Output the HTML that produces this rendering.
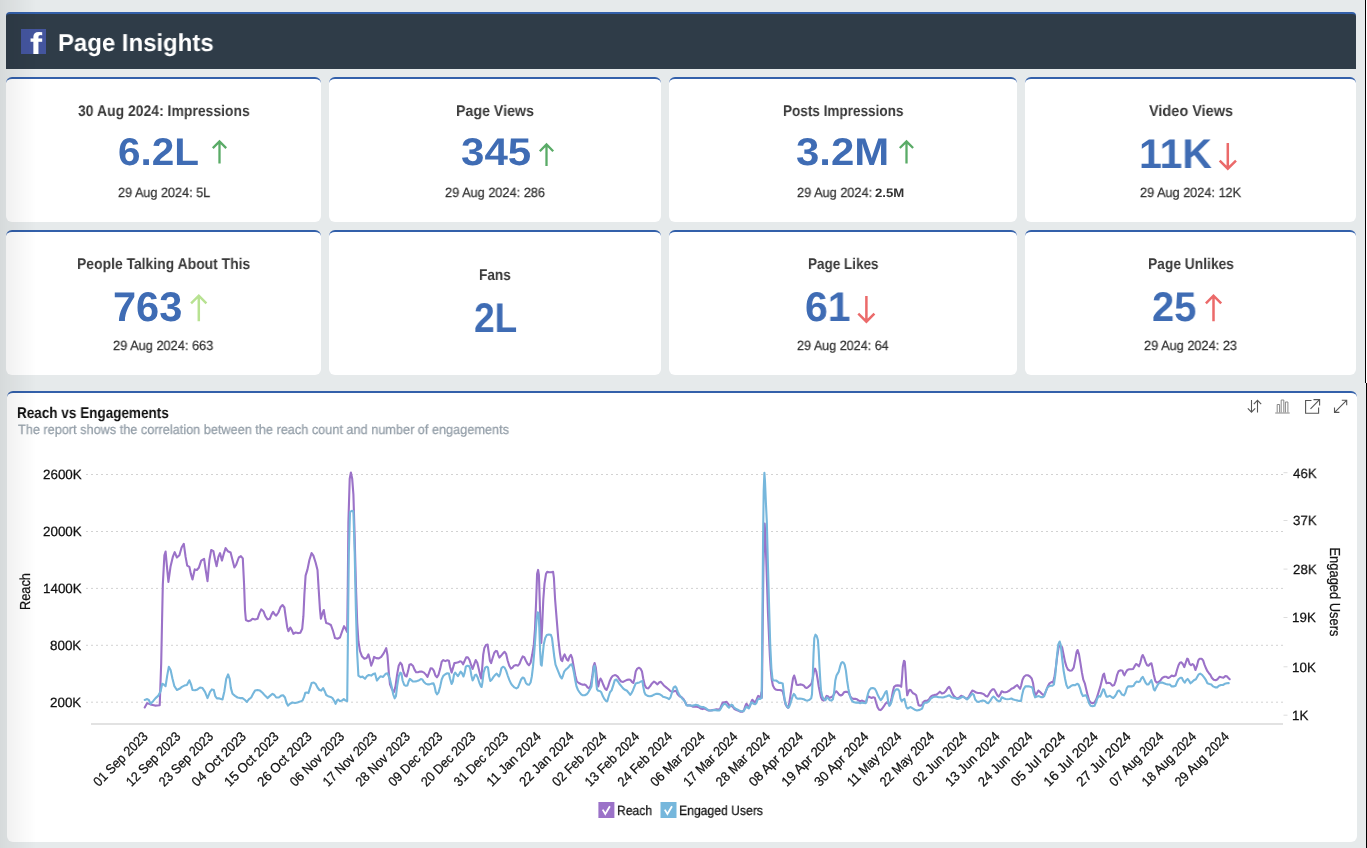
<!DOCTYPE html>
<html><head><meta charset="utf-8"><title>Page Insights</title>
<style>
html,body{margin:0;padding:0}
body{width:1367px;height:848px;overflow:hidden;background:#e6eaeb;position:relative;font-family:"Liberation Sans", sans-serif}
.hdr{position:absolute;left:6px;top:12px;width:1350px;height:55px;background:#2f3c48;border-top:2px solid #3360aa;border-radius:4px 4px 0 0}
.card{position:absolute;background:#fff;border-top:2px solid #3360aa;border-radius:6px;box-sizing:content-box}
.t{will-change:transform;text-rendering:geometricPrecision;position:absolute;white-space:nowrap;line-height:1;transform-origin:0 0;display:block}
.fb{position:absolute;left:21px;top:29px;width:25px;height:25px;background:#44559e;overflow:hidden}
.fb span{will-change:transform;text-rendering:geometricPrecision;position:absolute;left:9px;top:-1.3px;font-size:33px;font-weight:700;color:#fff;line-height:1;transform:scaleX(1.1);transform-origin:0 0}
svg{position:absolute;left:0;top:0;will-change:transform}
svg text{font-family:"Liberation Sans", sans-serif;fill:#111;stroke:#111;stroke-width:0.25px;text-rendering:geometricPrecision}
.shade{position:absolute;left:0;top:0;width:36px;height:848px;background:linear-gradient(to right,rgba(0,0,0,0.065),rgba(0,0,0,0))}
.vl{position:absolute;background:#000;width:1px}
</style></head><body>
<div class="hdr"></div>
<div class="fb"><span>f</span></div>
<div class="card" style="left:6px;top:77px;width:315px;height:143px"></div><div class="card" style="left:329px;top:77px;width:332px;height:143px"></div><div class="card" style="left:669px;top:77px;width:348px;height:143px"></div><div class="card" style="left:1025px;top:77px;width:331px;height:143px"></div><div class="card" style="left:6px;top:230px;width:315px;height:143px"></div><div class="card" style="left:329px;top:230px;width:332px;height:143px"></div><div class="card" style="left:669px;top:230px;width:348px;height:143px"></div><div class="card" style="left:1025px;top:230px;width:331px;height:143px"></div>
<div class="card" style="left:7px;top:391px;width:1350px;height:449px"></div>
<svg width="1367" height="848" viewBox="0 0 1367 848">
<path d="M219.5,163.4 V141.4 M212.8,148.1 L219.5,141.4 L226.2,148.1" stroke="#5aab67" stroke-width="2.3" fill="none" stroke-linejoin="miter"/><path d="M546.5,166.0 V144.5 M539.8,151.2 L546.5,144.5 L553.2,151.2" stroke="#5aab67" stroke-width="2.3" fill="none" stroke-linejoin="miter"/><path d="M906.5,163.4 V141.4 M899.8,148.0 L906.5,141.4 L913.1,148.0" stroke="#5aab67" stroke-width="2.3" fill="none" stroke-linejoin="miter"/><path d="M1227.8,143.0 V168.7 M1219.7,160.6 L1227.8,168.7 L1236.0,160.6" stroke="#eb6a6a" stroke-width="2.5" fill="none" stroke-linejoin="miter"/><path d="M198.8,321.3 V295.7 M191.1,303.3 L198.8,295.7 L206.4,303.3" stroke="#b8e292" stroke-width="2.5" fill="none" stroke-linejoin="miter"/><path d="M866.4,296.0 V321.7 M858.3,313.6 L866.4,321.7 L874.4,313.6" stroke="#eb6a6a" stroke-width="2.5" fill="none" stroke-linejoin="miter"/><path d="M1213.5,321.3 V295.7 M1205.9,303.4 L1213.5,295.7 L1221.2,303.4" stroke="#eb6a6a" stroke-width="2.5" fill="none" stroke-linejoin="miter"/>
<line x1="86" x2="1283" y1="474.5" y2="474.5" stroke="#d2d2d2" stroke-width="1" stroke-dasharray="2,3"/><line x1="86" x2="1283" y1="531.5" y2="531.5" stroke="#d2d2d2" stroke-width="1" stroke-dasharray="2,3"/><line x1="86" x2="1283" y1="588.4" y2="588.4" stroke="#d2d2d2" stroke-width="1" stroke-dasharray="2,3"/><line x1="86" x2="1283" y1="645.3" y2="645.3" stroke="#d2d2d2" stroke-width="1" stroke-dasharray="2,3"/><line x1="86" x2="1283" y1="702.2" y2="702.2" stroke="#d2d2d2" stroke-width="1" stroke-dasharray="2,3"/><line x1="1283.5" x2="1287.5" y1="472.7" y2="472.7" stroke="#dcdcdc" stroke-width="1"/><line x1="1283.5" x2="1287.5" y1="520.5" y2="520.5" stroke="#dcdcdc" stroke-width="1"/><line x1="1283.5" x2="1287.5" y1="569.1" y2="569.1" stroke="#dcdcdc" stroke-width="1"/><line x1="1283.5" x2="1287.5" y1="617.5" y2="617.5" stroke="#dcdcdc" stroke-width="1"/><line x1="1283.5" x2="1287.5" y1="666.8" y2="666.8" stroke="#dcdcdc" stroke-width="1"/><line x1="1283.5" x2="1287.5" y1="715.2" y2="715.2" stroke="#dcdcdc" stroke-width="1"/><line x1="91" x2="1283" y1="724" y2="724" stroke="#e2e2e2" stroke-width="2"/>
<path d="M144.7,707.5 L147.2,703.1 L150.3,704.4 L155.0,705.6 L159.7,705.3 L161.2,663.1 L162.8,585.0 L164.4,555.3 L165.6,551.6 L166.9,566.2 L168.4,581.9 L170.6,566.2 L172.8,556.9 L174.7,552.2 L176.9,557.5 L179.4,555.3 L181.6,547.5 L183.8,543.8 L185.6,556.9 L187.2,565.6 L189.4,566.9 L190.9,574.1 L192.5,579.4 L194.7,569.4 L196.9,570.0 L198.8,567.8 L201.2,560.6 L204.1,558.8 L205.6,569.4 L207.5,581.2 L209.4,560.0 L211.2,550.0 L213.4,551.2 L215.0,559.4 L216.6,566.2 L218.4,556.9 L220.0,553.1 L221.9,560.6 L223.8,553.8 L225.6,548.1 L227.8,551.2 L230.6,552.5 L232.5,560.0 L234.4,567.5 L236.2,564.7 L238.8,557.5 L240.9,556.2 L242.8,558.4 L244.1,585.0 L245.0,610.0 L245.9,620.0 L248.1,621.2 L250.6,620.6 L252.5,618.8 L255.0,619.4 L257.5,618.8 L259.4,613.1 L261.2,609.4 L263.4,611.2 L265.3,616.2 L267.5,619.4 L269.7,618.8 L271.6,614.4 L273.1,611.9 L274.7,614.4 L276.2,615.6 L278.4,612.5 L280.6,606.9 L282.5,605.0 L284.4,607.5 L285.6,616.2 L287.2,627.2 L288.4,631.2 L290.3,627.5 L291.9,630.3 L293.4,633.8 L295.6,632.5 L297.8,633.1 L300.3,632.8 L302.2,628.8 L303.4,616.2 L304.4,594.4 L305.6,575.6 L307.5,569.4 L309.4,560.0 L311.6,553.1 L313.4,555.6 L315.6,562.5 L317.5,570.0 L318.8,591.2 L320.0,610.0 L320.9,618.8 L322.5,613.1 L323.8,610.0 L325.0,617.5 L326.2,623.1 L328.8,623.8 L330.9,625.0 L333.1,631.2 L335.0,638.1 L337.5,638.8 L340.0,637.5 L342.2,631.2 L344.1,626.2 L345.6,628.8 L347.2,631.9 L347.8,585.0 L348.4,522.5 L349.7,478.8 L350.9,472.5 L352.2,478.8 L353.4,494.4 L354.7,538.1 L355.9,585.0 L357.2,622.5 L358.4,641.2 L360.0,651.2 L361.9,656.2 L364.4,658.8 L366.6,658.1 L368.4,654.4 L370.0,660.0 L371.2,665.6 L372.8,661.6 L374.1,656.9 L376.2,658.1 L378.8,658.4 L381.2,656.9 L383.8,653.1 L386.2,648.1 L387.5,655.3 L388.8,672.5 L390.0,684.4 L392.0,689.4 L394.0,691.9 L395.5,686.4 L397.1,674.6 L398.7,665.7 L400.3,662.7 L401.9,664.7 L403.4,671.6 L405.0,675.5 L406.6,676.5 L408.2,670.6 L409.4,664.7 L410.9,664.1 L412.9,665.7 L414.5,669.6 L416.1,672.2 L418.0,672.2 L420.0,671.6 L422.0,671.6 L424.0,672.6 L425.9,674.6 L427.5,676.9 L429.1,672.6 L430.7,668.2 L432.3,668.6 L433.8,670.6 L435.4,675.5 L437.0,677.3 L438.6,674.6 L440.2,668.6 L441.7,661.7 L443.3,660.1 L445.3,661.1 L447.3,660.3 L448.9,660.7 L450.0,666.7 L451.6,672.6 L452.8,668.6 L454.4,663.1 L456.4,662.7 L458.3,662.3 L459.9,661.3 L461.5,661.7 L463.1,664.3 L464.7,660.7 L466.2,657.4 L467.8,657.2 L469.4,659.7 L471.0,664.7 L472.6,669.0 L474.1,664.7 L475.7,660.1 L477.3,662.7 L478.9,669.6 L480.5,676.5 L481.3,678.5 L482.0,670.6 L483.2,654.8 L484.4,647.9 L486.0,644.9 L487.6,644.5 L488.8,652.8 L489.9,660.7 L491.1,663.1 L492.7,657.8 L494.3,652.8 L495.9,650.9 L497.1,651.3 L498.2,654.8 L499.4,657.6 L501.0,655.8 L502.6,653.8 L504.6,651.8 L506.1,653.8 L507.7,660.7 L509.3,665.7 L510.9,668.6 L512.5,667.6 L514.0,665.7 L516.0,665.1 L518.0,665.7 L519.6,663.7 L521.1,659.7 L522.7,656.4 L524.3,657.2 L525.9,660.7 L527.5,663.7 L529.0,665.3 L530.6,662.7 L532.2,654.8 L533.8,644.9 L535.0,629.1 L536.2,599.5 L537.1,573.8 L538.1,569.9 L538.9,574.8 L539.7,599.5 L540.5,627.2 L541.3,643.0 L542.1,627.2 L543.3,599.5 L544.5,583.7 L546.0,573.8 L547.2,571.9 L549.2,572.2 L551.2,572.2 L553.1,571.9 L553.9,577.8 L555.1,599.5 L556.7,619.3 L558.3,639.0 L559.9,652.8 L561.0,659.7 L562.2,661.1 L563.4,656.8 L564.6,654.4 L565.8,657.2 L567.0,659.7 L568.2,660.7 L569.3,657.2 L570.9,654.8 L572.1,657.8 L573.7,666.7 L575.3,675.5 L576.8,681.5 L578.8,683.0 L580.8,684.0 L582.8,684.8 L584.4,684.4 L585.9,685.2 L587.5,687.4 L589.1,688.4 L590.7,685.4 L592.3,676.5 L593.4,666.7 L594.6,663.1 L595.8,667.6 L597.0,678.5 L598.2,686.4 L599.4,681.5 L600.5,678.5 L601.7,680.5 L603.3,684.8 L604.9,688.4 L606.5,690.0 L608.1,686.4 L609.6,681.5 L611.2,677.9 L612.8,675.9 L614.8,675.1 L616.3,675.5 L617.9,676.9 L619.5,679.5 L621.1,681.5 L623.1,681.9 L625.0,680.9 L627.0,679.9 L629.0,679.5 L630.6,680.1 L632.1,682.1 L633.3,682.9 L634.5,678.5 L635.7,671.6 L637.3,668.6 L638.9,667.8 L640.4,668.6 L642.0,671.6 L643.2,678.5 L644.8,685.4 L646.4,688.0 L648.3,688.4 L649.9,686.4 L650.0,686.4 L652.0,683.4 L654.0,681.5 L655.9,682.9 L657.5,684.4 L659.1,682.5 L660.7,681.7 L662.2,683.4 L664.2,685.8 L666.2,687.4 L668.2,689.0 L670.1,690.8 L672.1,691.9 L674.1,691.3 L676.1,690.8 L677.7,694.3 L679.6,696.3 L681.6,697.3 L683.6,699.2 L685.2,702.2 L686.7,705.2 L688.7,705.2 L690.7,705.6 L692.7,706.6 L694.6,706.8 L696.6,706.8 L698.6,707.1 L700.6,708.5 L702.5,709.1 L704.5,708.5 L706.5,709.5 L708.5,710.5 L710.4,710.5 L712.4,710.1 L714.4,709.7 L716.4,709.3 L718.3,709.5 L719.9,709.1 L721.1,706.2 L722.7,702.6 L724.7,702.2 L726.6,701.8 L728.2,703.8 L729.8,706.2 L731.4,705.8 L733.0,707.1 L734.5,709.1 L736.5,710.1 L738.5,710.9 L740.5,711.7 L742.4,711.7 L744.0,710.1 L745.2,706.2 L746.4,703.8 L747.6,705.2 L748.8,707.1 L749.9,706.2 L751.1,702.2 L752.3,699.8 L753.5,701.0 L754.7,702.6 L755.9,701.2 L757.1,698.3 L758.2,695.9 L759.4,696.7 L760.6,697.5 L761.4,692.3 L761.9,697.7 L762.5,644.0 L763.4,567.4 L764.7,523.5 L765.6,539.8 L766.2,558.2 L767.1,585.8 L768.0,613.4 L769.0,636.4 L769.9,656.3 L770.8,670.1 L771.7,679.3 L772.9,685.5 L774.5,688.5 L775.6,689.4 L777.6,690.0 L779.6,690.0 L781.5,690.4 L782.7,691.3 L783.9,696.3 L785.5,704.2 L787.1,707.1 L788.3,707.7 L789.4,702.2 L790.6,694.3 L791.8,686.4 L793.0,678.5 L794.2,675.5 L795.4,679.5 L796.6,684.8 L798.1,685.0 L800.1,684.4 L802.1,684.8 L803.7,685.4 L805.2,687.4 L806.8,688.0 L808.4,686.8 L810.0,685.4 L811.6,683.4 L812.7,678.5 L813.9,671.6 L815.1,668.6 L816.3,671.6 L817.5,678.5 L818.7,686.4 L819.9,692.3 L821.0,697.3 L822.2,699.8 L823.8,700.6 L825.4,698.3 L826.6,695.9 L827.8,696.3 L829.3,697.9 L830.9,697.3 L832.5,696.3 L834.1,694.3 L835.3,691.9 L836.5,691.3 L837.6,692.7 L839.2,694.7 L840.8,695.5 L842.4,694.7 L844.0,692.3 L845.5,691.7 L847.1,691.9 L848.7,692.7 L850.3,696.3 L851.9,698.3 L853.4,698.9 L855.4,698.9 L857.0,699.2 L858.6,700.6 L860.2,701.2 L861.7,700.6 L863.3,701.2 L864.9,701.8 L866.1,702.2 L867.3,698.3 L868.4,696.3 L870.0,697.3 L871.6,697.9 L873.2,697.3 L874.8,697.7 L876.0,702.2 L877.5,707.1 L879.1,709.7 L880.7,710.1 L882.3,708.5 L883.9,706.2 L885.4,703.8 L887.0,702.2 L888.2,703.2 L889.4,705.2 L890.6,702.2 L891.8,697.3 L892.9,691.3 L894.1,686.8 L895.7,685.6 L897.7,685.4 L899.7,685.6 L901.2,686.8 L902.0,678.5 L902.8,666.7 L904.0,660.7 L904.8,661.7 L905.6,672.6 L906.4,686.4 L907.2,695.3 L908.3,692.3 L909.5,689.8 L910.7,690.0 L911.9,691.9 L913.1,693.3 L914.7,693.9 L916.2,695.3 L917.4,700.2 L918.6,705.2 L920.1,705.7 L922.1,705.0 L923.5,701.9 L925.0,700.7 L926.9,700.9 L928.8,699.5 L930.8,696.6 L932.7,695.4 L934.6,694.9 L936.6,694.6 L938.5,693.0 L939.9,691.7 L941.9,693.4 L943.8,693.0 L945.7,691.3 L947.7,688.1 L949.1,686.9 L950.6,689.3 L952.0,693.0 L953.9,696.1 L955.9,697.8 L957.8,698.5 L959.7,697.1 L961.2,695.8 L963.1,696.6 L965.0,697.8 L967.0,699.0 L968.9,696.6 L970.8,693.0 L972.3,690.5 L974.2,691.3 L976.2,692.5 L978.1,693.0 L980.0,693.0 L981.9,693.4 L983.9,694.2 L985.8,696.1 L987.3,696.6 L988.7,694.6 L990.6,691.3 L992.6,689.3 L994.0,689.3 L995.5,691.7 L997.4,695.4 L998.8,696.6 L1000.3,694.2 L1001.7,691.3 L1003.7,692.2 L1005.6,692.2 L1007.5,691.7 L1009.5,690.5 L1011.4,688.8 L1013.3,688.1 L1015.3,686.4 L1017.2,685.0 L1018.6,686.9 L1020.1,688.8 L1021.1,685.7 L1022.5,679.7 L1024.0,676.8 L1025.9,675.3 L1027.8,675.3 L1029.7,676.3 L1031.7,678.5 L1033.1,683.3 L1034.1,690.5 L1035.5,695.4 L1037.0,693.0 L1038.4,690.5 L1039.9,691.7 L1041.8,693.7 L1043.8,695.4 L1045.2,693.0 L1046.6,689.3 L1048.1,685.7 L1049.5,683.3 L1051.5,682.1 L1052.9,682.6 L1054.4,677.3 L1055.8,667.6 L1057.3,655.5 L1058.7,647.1 L1060.2,645.9 L1062.1,647.1 L1063.5,654.3 L1065.0,661.6 L1066.4,666.4 L1067.9,669.5 L1069.8,670.7 L1071.8,670.5 L1073.7,667.6 L1075.1,660.4 L1076.6,651.9 L1077.6,650.0 L1079.0,654.3 L1080.4,662.8 L1081.9,672.4 L1083.3,679.7 L1084.8,683.3 L1086.2,689.3 L1087.7,695.4 L1089.1,700.2 L1090.6,702.6 L1092.5,703.3 L1094.5,702.6 L1096.4,699.0 L1098.3,693.0 L1100.2,686.9 L1101.7,680.9 L1103.1,674.8 L1104.1,673.6 L1105.1,678.5 L1106.5,683.3 L1108.5,682.8 L1110.4,683.3 L1112.3,685.7 L1114.2,685.0 L1115.7,680.9 L1117.1,674.8 L1118.6,671.2 L1120.5,670.3 L1122.5,670.7 L1123.4,673.6 L1124.4,675.3 L1125.8,672.4 L1127.3,670.0 L1129.2,669.3 L1131.1,669.3 L1133.1,669.0 L1134.5,666.4 L1136.0,664.0 L1137.4,664.7 L1138.9,666.4 L1140.3,662.8 L1141.8,656.7 L1142.7,655.0 L1144.2,657.9 L1145.6,662.3 L1147.1,665.2 L1148.5,665.7 L1150.0,664.0 L1151.4,663.3 L1152.4,667.6 L1153.8,674.8 L1155.3,680.9 L1156.7,682.6 L1158.7,682.1 L1160.6,680.2 L1162.5,677.7 L1164.5,676.8 L1166.4,676.8 L1168.3,678.0 L1170.3,676.8 L1171.7,675.6 L1173.6,676.3 L1175.6,675.3 L1177.0,670.0 L1178.5,665.2 L1179.9,662.8 L1181.4,662.3 L1182.8,664.0 L1184.3,667.1 L1185.7,662.8 L1187.2,658.7 L1188.1,659.2 L1189.6,664.0 L1191.0,665.2 L1192.5,664.0 L1193.9,665.2 L1195.4,670.0 L1196.8,666.4 L1198.3,660.4 L1199.7,658.7 L1201.6,658.7 L1203.1,660.4 L1204.5,664.7 L1206.0,668.3 L1207.4,671.2 L1208.9,673.2 L1210.3,674.8 L1211.8,677.7 L1213.7,679.7 L1215.6,680.2 L1217.6,679.2 L1219.5,676.8 L1221.4,677.3 L1223.4,677.7 L1225.3,676.1 L1226.8,676.3 L1228.2,677.7 L1229.7,679.2" fill="none" stroke="#9b72c8" stroke-width="2.1" stroke-linejoin="round" stroke-linecap="round"/><path d="M144.7,700.0 L147.2,699.1 L148.8,700.0 L150.6,703.8 L153.1,701.2 L155.6,698.1 L158.1,695.9 L160.6,691.2 L162.2,683.8 L163.8,684.4 L165.6,686.2 L167.2,675.6 L168.8,666.9 L170.6,670.0 L172.5,678.8 L174.4,686.2 L176.9,690.0 L179.4,688.8 L181.9,686.9 L184.4,685.6 L186.9,685.0 L189.4,680.3 L191.2,685.0 L192.5,690.0 L195.0,690.3 L197.5,689.4 L200.0,687.5 L202.5,688.1 L205.0,691.9 L207.5,698.1 L210.0,691.9 L211.9,689.4 L213.8,690.0 L215.3,696.2 L216.9,698.4 L219.4,698.4 L222.5,699.4 L224.4,691.2 L226.2,678.8 L228.1,674.4 L229.7,678.8 L230.9,688.1 L232.5,693.8 L235.0,695.9 L237.5,697.5 L240.0,698.1 L242.5,698.1 L245.0,700.0 L246.9,701.9 L248.8,699.4 L251.2,697.5 L253.1,693.8 L255.0,690.6 L257.5,690.0 L260.0,690.6 L262.5,692.8 L265.0,695.6 L267.5,698.1 L270.0,695.9 L272.5,693.8 L274.4,695.0 L276.2,697.5 L278.8,697.5 L281.2,695.6 L283.1,695.3 L285.0,697.5 L286.6,703.1 L288.1,705.6 L290.0,703.8 L292.5,702.5 L295.0,703.1 L297.5,702.5 L300.0,701.6 L302.5,700.6 L304.1,696.9 L305.3,692.8 L306.9,692.5 L308.4,693.1 L310.0,688.1 L311.6,683.1 L313.8,682.5 L315.6,683.8 L317.5,687.5 L319.4,690.0 L321.2,690.6 L323.1,688.1 L324.7,691.2 L326.2,695.0 L328.1,696.2 L330.6,696.9 L332.5,698.1 L334.4,701.2 L335.6,703.8 L336.9,700.6 L338.1,699.4 L340.0,701.2 L341.9,700.6 L343.8,699.1 L345.6,700.6 L347.2,701.2 L347.8,647.5 L348.8,553.8 L350.0,511.9 L351.9,510.9 L353.4,511.2 L354.7,553.8 L355.9,610.0 L357.2,653.8 L358.4,675.6 L360.6,677.2 L362.5,676.6 L365.0,678.8 L366.9,676.2 L368.8,675.0 L371.2,675.6 L373.1,674.1 L375.0,673.4 L376.9,680.6 L378.8,678.1 L380.6,676.2 L383.1,676.9 L385.6,673.8 L387.5,673.4 L390.0,679.5 L391.6,686.4 L393.2,694.3 L394.7,698.3 L395.9,696.3 L397.1,686.4 L398.7,676.5 L400.3,672.6 L401.5,673.6 L402.6,680.5 L404.2,684.8 L405.8,685.8 L407.4,685.4 L408.6,681.5 L409.8,678.9 L411.3,680.1 L412.9,681.5 L414.9,681.5 L416.9,681.1 L418.8,680.5 L420.8,679.1 L422.4,679.5 L424.0,682.1 L425.6,683.6 L427.5,684.4 L429.5,684.4 L431.5,683.6 L433.5,683.4 L434.6,686.4 L435.8,692.3 L437.0,694.3 L438.6,692.3 L440.2,686.4 L441.7,679.5 L443.3,675.9 L445.3,674.2 L447.3,673.2 L448.9,673.6 L450.0,678.5 L451.6,684.0 L452.8,681.5 L454.0,674.6 L455.2,672.6 L456.4,674.2 L457.9,676.1 L459.5,673.6 L460.7,671.6 L461.9,673.0 L463.5,676.5 L464.7,672.6 L465.8,666.7 L467.4,665.7 L469.0,666.1 L470.2,668.6 L471.4,675.5 L472.6,680.5 L473.7,678.5 L474.9,675.1 L476.1,674.6 L477.7,677.5 L479.3,682.5 L480.9,686.4 L481.6,687.0 L482.4,682.5 L483.6,672.6 L485.2,667.6 L486.8,666.7 L488.0,667.6 L489.2,676.5 L490.3,680.9 L491.9,679.5 L493.5,676.9 L495.1,675.0 L496.7,673.6 L497.8,675.0 L499.0,676.5 L500.2,673.6 L501.4,668.2 L503.0,666.7 L504.6,667.6 L506.1,670.6 L507.7,675.5 L509.3,679.9 L510.9,683.4 L512.5,685.6 L514.4,687.4 L516.4,688.4 L518.0,687.4 L519.6,683.4 L521.1,679.5 L522.7,677.5 L524.3,678.5 L525.9,682.9 L527.5,684.4 L529.0,684.8 L530.6,682.5 L531.8,676.5 L533.0,666.7 L534.2,652.8 L535.4,637.0 L536.6,619.3 L537.7,612.3 L538.5,612.9 L539.3,627.2 L540.1,650.9 L540.9,664.7 L541.7,665.7 L542.5,656.8 L543.7,644.9 L545.2,638.0 L546.8,635.1 L548.8,634.5 L550.8,634.7 L552.0,638.0 L553.1,646.9 L554.3,656.8 L555.5,664.7 L557.1,668.6 L558.7,672.6 L560.3,676.5 L561.8,678.5 L563.0,675.5 L564.2,671.6 L565.8,669.6 L567.4,668.2 L568.9,666.7 L570.5,664.7 L571.7,664.3 L572.9,667.6 L574.1,673.6 L575.3,680.5 L576.5,686.4 L578.0,690.0 L579.6,692.3 L581.2,694.3 L582.8,695.3 L584.7,695.3 L586.7,694.3 L588.3,692.3 L589.9,689.4 L591.5,686.4 L592.6,676.5 L593.8,667.6 L594.6,665.7 L595.4,670.6 L596.2,682.5 L597.0,689.4 L598.2,690.8 L599.8,691.0 L601.3,692.3 L602.9,696.3 L604.5,699.2 L606.1,701.2 L607.3,701.2 L608.4,697.3 L610.0,692.3 L611.6,690.4 L613.2,685.4 L614.8,680.1 L616.3,679.5 L617.9,681.5 L619.5,684.0 L621.5,686.4 L623.1,688.4 L625.0,689.8 L627.0,690.8 L628.6,692.7 L630.2,694.9 L631.4,693.3 L632.9,690.4 L634.5,686.4 L635.7,683.4 L637.3,682.9 L639.3,682.5 L640.8,681.5 L642.4,681.1 L643.2,686.4 L644.4,692.3 L645.6,694.7 L647.6,695.9 L649.5,696.3 L650.0,696.3 L652.0,695.9 L654.0,694.7 L655.9,693.9 L657.9,693.9 L659.9,694.3 L661.5,695.3 L663.0,696.7 L665.0,697.3 L667.0,697.9 L669.0,699.2 L670.5,697.3 L672.1,692.3 L673.7,687.4 L675.3,686.4 L676.5,688.0 L677.7,691.3 L679.2,694.7 L680.8,696.9 L682.8,699.2 L684.8,701.2 L686.3,704.8 L687.9,705.8 L689.9,705.2 L691.9,705.8 L693.8,705.4 L695.8,704.8 L697.8,705.2 L699.8,706.6 L701.7,707.1 L703.7,707.1 L705.7,708.1 L707.7,709.7 L709.6,710.5 L711.6,710.5 L713.6,710.1 L715.6,710.1 L717.5,710.5 L719.5,710.5 L721.1,708.1 L722.7,705.2 L724.3,703.8 L725.8,704.2 L727.4,706.2 L729.0,707.7 L730.2,706.2 L731.4,704.6 L732.6,705.2 L734.1,707.7 L735.7,708.7 L737.7,709.7 L739.7,710.9 L741.6,711.3 L743.6,711.3 L745.2,708.5 L746.4,706.6 L747.6,707.7 L748.8,708.5 L749.9,706.2 L751.1,702.6 L752.3,702.6 L753.5,703.8 L755.1,704.2 L756.3,703.2 L757.4,700.2 L758.6,698.7 L759.8,699.0 L761.0,698.3 L761.6,697.7 L762.2,644.0 L763.1,536.7 L763.7,490.7 L764.4,472.9 L765.0,481.5 L765.9,502.9 L766.8,521.3 L768.0,567.4 L769.3,613.4 L770.2,644.0 L771.4,668.6 L772.3,677.2 L772.9,680.2 L774.0,680.5 L776.0,680.5 L777.6,681.5 L779.2,682.9 L781.1,682.9 L782.7,683.4 L783.5,690.4 L784.7,700.2 L786.3,705.2 L787.9,707.7 L789.0,707.1 L790.2,704.2 L791.4,700.2 L792.6,696.3 L793.8,693.9 L795.0,695.3 L796.2,697.9 L797.7,698.7 L799.7,698.5 L801.7,698.7 L803.7,699.2 L805.6,700.2 L807.6,700.6 L809.6,699.8 L811.2,698.3 L812.0,694.3 L812.7,678.5 L813.5,654.8 L814.3,638.0 L815.5,634.7 L816.7,636.0 L817.9,640.0 L818.7,650.9 L819.5,666.7 L820.3,680.5 L821.0,690.4 L822.2,696.3 L823.8,699.2 L825.4,700.2 L827.0,697.3 L828.2,698.3 L829.7,700.2 L831.3,700.6 L832.9,699.2 L834.1,692.3 L835.3,680.5 L836.5,675.5 L837.6,673.6 L838.8,671.6 L840.0,666.7 L841.2,663.1 L842.4,662.1 L843.6,662.7 L844.7,664.7 L845.9,670.6 L847.1,680.5 L848.3,688.4 L849.5,694.3 L850.7,698.3 L852.3,701.2 L854.2,702.2 L856.2,702.6 L858.2,702.6 L860.2,703.2 L862.1,702.6 L864.1,703.0 L865.7,703.2 L866.9,698.3 L868.1,693.3 L869.2,690.4 L870.8,688.4 L872.8,688.0 L874.8,688.8 L876.3,691.3 L877.9,695.3 L879.5,698.3 L880.7,700.2 L882.3,698.3 L883.9,695.3 L885.4,692.3 L886.6,691.0 L887.4,695.3 L888.2,702.2 L889.4,705.8 L890.6,704.2 L891.8,700.6 L892.9,696.3 L894.5,691.3 L896.1,689.4 L898.1,689.4 L899.3,691.3 L900.4,698.3 L901.6,701.2 L902.8,699.8 L904.4,698.9 L905.2,702.2 L906.4,707.1 L907.6,708.5 L909.1,707.7 L910.7,707.1 L912.3,708.1 L913.9,709.1 L915.5,710.1 L917.0,710.5 L918.6,710.1 L919.7,709.9 L922.1,708.6 L923.5,704.3 L925.0,702.6 L926.9,702.6 L928.8,701.4 L930.8,698.5 L932.7,697.3 L934.6,696.8 L936.6,696.8 L938.5,697.1 L940.4,697.3 L942.4,697.5 L944.3,697.1 L946.2,696.6 L948.1,695.6 L949.6,695.4 L951.5,697.3 L953.5,697.8 L955.4,698.0 L957.3,699.0 L959.3,698.5 L961.2,697.5 L963.1,696.6 L965.0,697.8 L967.0,699.5 L968.9,697.8 L970.8,695.4 L972.3,693.7 L973.7,694.6 L975.2,699.5 L977.1,701.6 L979.0,701.9 L981.0,700.9 L982.9,700.4 L984.8,700.9 L986.8,702.8 L988.2,703.3 L990.2,700.9 L992.1,697.8 L993.5,696.6 L995.0,697.8 L996.9,700.2 L998.8,701.4 L1000.3,700.9 L1001.7,697.3 L1003.7,698.3 L1005.6,699.0 L1007.5,699.2 L1009.5,699.0 L1011.4,698.5 L1013.3,699.5 L1015.3,700.0 L1017.2,700.4 L1019.1,700.9 L1021.1,700.9 L1022.0,695.4 L1023.5,689.3 L1025.4,686.4 L1027.3,686.2 L1029.3,686.4 L1031.2,686.9 L1032.6,688.1 L1033.6,693.0 L1035.1,697.3 L1037.0,696.6 L1038.9,696.1 L1040.9,697.1 L1042.8,697.3 L1044.2,696.1 L1045.7,691.7 L1047.1,688.1 L1048.6,686.4 L1050.5,685.7 L1052.4,685.7 L1053.9,684.5 L1055.3,674.8 L1056.8,657.9 L1058.2,644.7 L1059.7,641.5 L1060.7,644.7 L1062.1,657.9 L1063.5,670.0 L1065.0,678.5 L1066.4,685.0 L1067.9,688.1 L1069.3,687.4 L1071.3,685.7 L1073.2,685.0 L1075.1,685.2 L1077.1,683.8 L1078.5,684.5 L1080.0,688.1 L1081.4,693.0 L1082.9,696.1 L1084.8,695.4 L1086.2,695.4 L1087.7,699.0 L1089.1,703.3 L1090.6,705.7 L1092.5,706.2 L1094.5,705.7 L1095.9,702.6 L1097.3,698.5 L1098.8,696.1 L1100.2,696.6 L1101.7,693.0 L1103.1,689.3 L1104.1,689.8 L1105.1,693.0 L1106.5,696.6 L1108.0,696.6 L1109.9,695.8 L1111.8,697.3 L1113.3,698.0 L1114.7,696.6 L1116.2,694.2 L1117.6,691.3 L1119.1,690.5 L1120.5,692.2 L1122.0,694.6 L1123.9,695.4 L1125.4,693.0 L1126.8,688.1 L1128.3,686.2 L1130.2,686.4 L1132.1,686.4 L1133.6,685.7 L1135.0,683.3 L1136.5,681.6 L1138.4,682.1 L1139.8,681.6 L1141.3,678.5 L1142.7,676.8 L1144.2,679.7 L1145.6,682.8 L1147.1,684.5 L1148.5,684.5 L1150.0,682.1 L1151.4,680.2 L1152.4,683.3 L1153.8,689.3 L1154.8,690.5 L1156.3,687.4 L1158.2,684.0 L1160.1,682.6 L1162.1,682.6 L1164.0,683.3 L1165.9,684.0 L1167.8,684.5 L1169.8,684.5 L1171.7,686.4 L1173.6,686.4 L1175.6,685.7 L1177.0,682.1 L1178.5,679.2 L1180.4,677.7 L1181.8,677.7 L1183.3,680.9 L1184.7,682.6 L1186.2,680.2 L1187.6,678.9 L1189.1,680.9 L1190.5,683.3 L1192.0,682.1 L1193.9,680.2 L1195.9,679.2 L1197.3,676.8 L1198.7,674.4 L1200.2,673.6 L1202.1,674.8 L1204.1,677.3 L1206.0,680.2 L1207.4,683.3 L1209.4,684.0 L1211.3,684.5 L1213.2,686.4 L1215.2,687.4 L1217.1,687.4 L1219.0,685.7 L1221.0,685.0 L1222.9,685.0 L1224.8,683.8 L1226.8,683.3 L1228.7,683.1" fill="none" stroke="#76b7dc" stroke-width="2.1" stroke-linejoin="round" stroke-linecap="round"/>
<text x="148.6" y="737.3" text-anchor="end" font-size="13.5" textLength="70.5" lengthAdjust="spacingAndGlyphs" transform="rotate(-45 148.6 737.3)">01 Sep 2023</text><text x="181.4" y="737.3" text-anchor="end" font-size="13.5" textLength="70.5" lengthAdjust="spacingAndGlyphs" transform="rotate(-45 181.4 737.3)">12 Sep 2023</text><text x="214.1" y="737.3" text-anchor="end" font-size="13.5" textLength="70.5" lengthAdjust="spacingAndGlyphs" transform="rotate(-45 214.1 737.3)">23 Sep 2023</text><text x="246.9" y="737.3" text-anchor="end" font-size="13.5" textLength="70.5" lengthAdjust="spacingAndGlyphs" transform="rotate(-45 246.9 737.3)">04 Oct 2023</text><text x="279.7" y="737.3" text-anchor="end" font-size="13.5" textLength="70.5" lengthAdjust="spacingAndGlyphs" transform="rotate(-45 279.7 737.3)">15 Oct 2023</text><text x="312.5" y="737.3" text-anchor="end" font-size="13.5" textLength="70.5" lengthAdjust="spacingAndGlyphs" transform="rotate(-45 312.5 737.3)">26 Oct 2023</text><text x="345.2" y="737.3" text-anchor="end" font-size="13.5" textLength="70.5" lengthAdjust="spacingAndGlyphs" transform="rotate(-45 345.2 737.3)">06 Nov 2023</text><text x="378.0" y="737.3" text-anchor="end" font-size="13.5" textLength="70.5" lengthAdjust="spacingAndGlyphs" transform="rotate(-45 378.0 737.3)">17 Nov 2023</text><text x="410.8" y="737.3" text-anchor="end" font-size="13.5" textLength="70.5" lengthAdjust="spacingAndGlyphs" transform="rotate(-45 410.8 737.3)">28 Nov 2023</text><text x="443.5" y="737.3" text-anchor="end" font-size="13.5" textLength="70.5" lengthAdjust="spacingAndGlyphs" transform="rotate(-45 443.5 737.3)">09 Dec 2023</text><text x="476.3" y="737.3" text-anchor="end" font-size="13.5" textLength="70.5" lengthAdjust="spacingAndGlyphs" transform="rotate(-45 476.3 737.3)">20 Dec 2023</text><text x="509.1" y="737.3" text-anchor="end" font-size="13.5" textLength="70.5" lengthAdjust="spacingAndGlyphs" transform="rotate(-45 509.1 737.3)">31 Dec 2023</text><text x="541.8" y="737.3" text-anchor="end" font-size="13.5" textLength="70.5" lengthAdjust="spacingAndGlyphs" transform="rotate(-45 541.8 737.3)">11 Jan 2024</text><text x="574.6" y="737.3" text-anchor="end" font-size="13.5" textLength="70.5" lengthAdjust="spacingAndGlyphs" transform="rotate(-45 574.6 737.3)">22 Jan 2024</text><text x="607.4" y="737.3" text-anchor="end" font-size="13.5" textLength="70.5" lengthAdjust="spacingAndGlyphs" transform="rotate(-45 607.4 737.3)">02 Feb 2024</text><text x="640.2" y="737.3" text-anchor="end" font-size="13.5" textLength="70.5" lengthAdjust="spacingAndGlyphs" transform="rotate(-45 640.2 737.3)">13 Feb 2024</text><text x="672.9" y="737.3" text-anchor="end" font-size="13.5" textLength="70.5" lengthAdjust="spacingAndGlyphs" transform="rotate(-45 672.9 737.3)">24 Feb 2024</text><text x="705.7" y="737.3" text-anchor="end" font-size="13.5" textLength="70.5" lengthAdjust="spacingAndGlyphs" transform="rotate(-45 705.7 737.3)">06 Mar 2024</text><text x="738.5" y="737.3" text-anchor="end" font-size="13.5" textLength="70.5" lengthAdjust="spacingAndGlyphs" transform="rotate(-45 738.5 737.3)">17 Mar 2024</text><text x="771.2" y="737.3" text-anchor="end" font-size="13.5" textLength="70.5" lengthAdjust="spacingAndGlyphs" transform="rotate(-45 771.2 737.3)">28 Mar 2024</text><text x="804.0" y="737.3" text-anchor="end" font-size="13.5" textLength="70.5" lengthAdjust="spacingAndGlyphs" transform="rotate(-45 804.0 737.3)">08 Apr 2024</text><text x="836.8" y="737.3" text-anchor="end" font-size="13.5" textLength="70.5" lengthAdjust="spacingAndGlyphs" transform="rotate(-45 836.8 737.3)">19 Apr 2024</text><text x="869.5" y="737.3" text-anchor="end" font-size="13.5" textLength="70.5" lengthAdjust="spacingAndGlyphs" transform="rotate(-45 869.5 737.3)">30 Apr 2024</text><text x="902.3" y="737.3" text-anchor="end" font-size="13.5" textLength="70.5" lengthAdjust="spacingAndGlyphs" transform="rotate(-45 902.3 737.3)">11 May 2024</text><text x="935.1" y="737.3" text-anchor="end" font-size="13.5" textLength="70.5" lengthAdjust="spacingAndGlyphs" transform="rotate(-45 935.1 737.3)">22 May 2024</text><text x="967.9" y="737.3" text-anchor="end" font-size="13.5" textLength="70.5" lengthAdjust="spacingAndGlyphs" transform="rotate(-45 967.9 737.3)">02 Jun 2024</text><text x="1000.6" y="737.3" text-anchor="end" font-size="13.5" textLength="70.5" lengthAdjust="spacingAndGlyphs" transform="rotate(-45 1000.6 737.3)">13 Jun 2024</text><text x="1033.4" y="737.3" text-anchor="end" font-size="13.5" textLength="70.5" lengthAdjust="spacingAndGlyphs" transform="rotate(-45 1033.4 737.3)">24 Jun 2024</text><text x="1066.2" y="737.3" text-anchor="end" font-size="13.5" textLength="70.5" lengthAdjust="spacingAndGlyphs" transform="rotate(-45 1066.2 737.3)">05 Jul 2024</text><text x="1098.9" y="737.3" text-anchor="end" font-size="13.5" textLength="70.5" lengthAdjust="spacingAndGlyphs" transform="rotate(-45 1098.9 737.3)">16 Jul 2024</text><text x="1131.7" y="737.3" text-anchor="end" font-size="13.5" textLength="70.5" lengthAdjust="spacingAndGlyphs" transform="rotate(-45 1131.7 737.3)">27 Jul 2024</text><text x="1164.5" y="737.3" text-anchor="end" font-size="13.5" textLength="70.5" lengthAdjust="spacingAndGlyphs" transform="rotate(-45 1164.5 737.3)">07 Aug 2024</text><text x="1197.2" y="737.3" text-anchor="end" font-size="13.5" textLength="70.5" lengthAdjust="spacingAndGlyphs" transform="rotate(-45 1197.2 737.3)">18 Aug 2024</text><text x="1230.0" y="737.3" text-anchor="end" font-size="13.5" textLength="70.5" lengthAdjust="spacingAndGlyphs" transform="rotate(-45 1230.0 737.3)">29 Aug 2024</text>
<text x="29.6" y="591.5" text-anchor="middle" font-size="14.5" textLength="37" lengthAdjust="spacingAndGlyphs" transform="rotate(-90 29.6 591.5)">Reach</text><text x="1330.1" y="592" text-anchor="middle" font-size="14.5" textLength="89" lengthAdjust="spacingAndGlyphs" transform="rotate(90 1330.1 592)">Engaged Users</text>
<rect x="598.4" y="802" width="16" height="16" fill="#9b72c8"/><rect x="660.5" y="802" width="16" height="16" fill="#76b7dc"/><path d="M602.7,809.6 L605.3,813.9 L609.9,806.2" fill="none" stroke="#fff" stroke-width="1.8"/><path d="M664.8,809.6 L667.4,813.9 L672,806.2" fill="none" stroke="#fff" stroke-width="1.8"/>
<path d="M1251.5,400 V412 M1247.8,408.3 L1251.5,412.2 L1255.2,408.3 M1257.5,412.5 V400.5 M1253.8,404.2 L1257.5,400.3 L1261.2,404.2" fill="none" stroke="#555" stroke-width="1.1"/><path d="M1275.2,413 H1289.7" stroke="#999" stroke-width="1.2" fill="none"/><path d="M1277.2,412.5 V404.5 H1279.6 V412.5 M1281.2,412.5 V400 H1283.8 V412.5 M1285.4,412.5 V402 H1287.9 V412.5" fill="none" stroke="#888" stroke-width="1"/><path d="M1311.5,400.5 H1305.6 V413.3 H1318.6 V407.5 M1313.5,399.6 H1319.6 V405.6 M1319.3,399.9 L1310.5,408.8" fill="none" stroke="#555" stroke-width="1.1"/><path d="M1334.6,412.3 L1346.6,400.4 M1341.8,400.3 H1346.7 V405.2 M1334.5,407.6 V412.4 H1339.4" fill="none" stroke="#555" stroke-width="1.1"/>
</svg>
<span class="t" style="left:57.52px;top:32.00px;font-size:24.5px;font-weight:700;color:#fff;transform:scaleX(0.9768)">Page Insights</span><span class="t" style="left:77.60px;top:103.80px;font-size:15.5px;font-weight:700;color:#3a3a3a;transform:scaleX(0.9012)">30 Aug 2024: Impressions</span><span class="t" style="left:456.08px;top:103.80px;font-size:15.5px;font-weight:700;color:#3a3a3a;transform:scaleX(0.9161)">Page Views</span><span class="t" style="left:782.83px;top:103.80px;font-size:15.5px;font-weight:700;color:#3a3a3a;transform:scaleX(0.8737)">Posts Impressions</span><span class="t" style="left:1148.90px;top:103.80px;font-size:15.5px;font-weight:700;color:#3a3a3a;transform:scaleX(0.9354)">Video Views</span><span class="t" style="left:76.70px;top:256.80px;font-size:15.5px;font-weight:700;color:#3a3a3a;transform:scaleX(0.8981)">People Talking About This</span><span class="t" style="left:479.22px;top:268.20px;font-size:15.5px;font-weight:700;color:#3a3a3a;transform:scaleX(0.8797)">Fans</span><span class="t" style="left:807.73px;top:256.80px;font-size:15.5px;font-weight:700;color:#3a3a3a;transform:scaleX(0.8706)">Page Likes</span><span class="t" style="left:1147.61px;top:256.80px;font-size:15.5px;font-weight:700;color:#3a3a3a;transform:scaleX(0.8907)">Page Unlikes</span><span class="t" style="left:117.55px;top:134.00px;font-size:38.6px;font-weight:700;color:#3f6cb4;transform:scaleX(1.0499)">6.2L</span><span class="t" style="left:460.60px;top:134.30px;font-size:38.6px;font-weight:700;color:#3f6cb4;transform:scaleX(1.0906)">345</span><span class="t" style="left:795.50px;top:134.00px;font-size:38.6px;font-weight:700;color:#3f6cb4;transform:scaleX(1.0869)">3.2M</span><span class="t" style="left:1138.52px;top:133.90px;font-size:41.4px;font-weight:700;color:#3f6cb4;transform:scaleX(0.9895)">11K</span><span class="t" style="left:113.30px;top:286.90px;font-size:41.4px;font-weight:700;color:#3f6cb4;transform:scaleX(1.0039)">763</span><span class="t" style="left:473.50px;top:298.40px;font-size:41.4px;font-weight:700;color:#3f6cb4;transform:scaleX(0.8954)">2L</span><span class="t" style="left:804.51px;top:286.90px;font-size:41.4px;font-weight:700;color:#3f6cb4;transform:scaleX(0.9882)">61</span><span class="t" style="left:1152.14px;top:286.90px;font-size:41.4px;font-weight:700;color:#3f6cb4;transform:scaleX(0.9632)">25</span><span class="t" style="-webkit-text-stroke:0.25px;left:117.50px;top:185.95px;font-size:13.4px;font-weight:400;color:#333333;transform:scaleX(0.9454)">29 Aug 2024: 5L</span><span class="t" style="-webkit-text-stroke:0.25px;left:445.00px;top:185.95px;font-size:13.4px;font-weight:400;color:#333333;transform:scaleX(0.9527)">29 Aug 2024: 286</span><span class="t" style="-webkit-text-stroke:0.25px;left:797.00px;top:185.95px;font-size:13.4px;font-weight:400;color:#333333;transform:scaleX(0.9525)">29 Aug 2024:</span><span class="t" style="-webkit-text-stroke:0.25px;left:1139.70px;top:185.95px;font-size:13.4px;font-weight:400;color:#333333;transform:scaleX(0.9498)">29 Aug 2024: 12K</span><span class="t" style="-webkit-text-stroke:0.25px;left:113.20px;top:338.95px;font-size:13.4px;font-weight:400;color:#333333;transform:scaleX(0.9555)">29 Aug 2024: 663</span><span class="t" style="-webkit-text-stroke:0.25px;left:796.60px;top:338.95px;font-size:13.4px;font-weight:400;color:#333333;transform:scaleX(0.9399)">29 Aug 2024: 64</span><span class="t" style="-webkit-text-stroke:0.25px;left:1144.00px;top:338.95px;font-size:13.4px;font-weight:400;color:#333333;transform:scaleX(0.9536)">29 Aug 2024: 23</span><span class="t" style="left:875.10px;top:186.82px;font-size:12.2px;font-weight:700;color:#333333;transform:scaleX(1.0801)">2.5M</span><span class="t" style="left:16.93px;top:405.80px;font-size:15.5px;font-weight:700;color:#111;transform:scaleX(0.8719)">Reach vs Engagements</span><span class="t" style="-webkit-text-stroke:0.25px;left:17.80px;top:422.95px;font-size:13.4px;font-weight:400;color:#939ea8;transform:scaleX(0.9489)">The report shows the correlation between the reach count and number of engagements</span><span class="t" style="-webkit-text-stroke:0.25px;left:617.39px;top:803.75px;font-size:13.4px;font-weight:400;color:#111;transform:scaleX(0.9071)">Reach</span><span class="t" style="-webkit-text-stroke:0.25px;left:679.09px;top:803.75px;font-size:13.4px;font-weight:400;color:#111;transform:scaleX(0.9093)">Engaged Users</span><span class="t" style="-webkit-text-stroke:0.25px;left:43.00px;top:468.15px;font-size:13.4px;font-weight:400;color:#111;transform:scaleX(1.0003)">2600K</span><span class="t" style="-webkit-text-stroke:0.25px;left:43.00px;top:525.15px;font-size:13.4px;font-weight:400;color:#111;transform:scaleX(1.0003)">2000K</span><span class="t" style="-webkit-text-stroke:0.25px;left:43.00px;top:582.05px;font-size:13.4px;font-weight:400;color:#111;transform:scaleX(1.0003)">1400K</span><span class="t" style="-webkit-text-stroke:0.25px;left:50.45px;top:638.95px;font-size:13.4px;font-weight:400;color:#111;transform:scaleX(1.0003)">800K</span><span class="t" style="-webkit-text-stroke:0.25px;left:50.45px;top:695.85px;font-size:13.4px;font-weight:400;color:#111;transform:scaleX(1.0003)">200K</span><span class="t" style="-webkit-text-stroke:0.25px;left:1292.70px;top:466.55px;font-size:13.4px;font-weight:400;color:#111;transform:scaleX(0.9877)">46K</span><span class="t" style="-webkit-text-stroke:0.25px;left:1292.70px;top:514.35px;font-size:13.4px;font-weight:400;color:#111;transform:scaleX(0.9877)">37K</span><span class="t" style="-webkit-text-stroke:0.25px;left:1292.70px;top:562.95px;font-size:13.4px;font-weight:400;color:#111;transform:scaleX(0.9877)">28K</span><span class="t" style="-webkit-text-stroke:0.25px;left:1291.71px;top:611.35px;font-size:13.4px;font-weight:400;color:#111;transform:scaleX(0.9877)">19K</span><span class="t" style="-webkit-text-stroke:0.25px;left:1291.71px;top:660.65px;font-size:13.4px;font-weight:400;color:#111;transform:scaleX(0.9877)">10K</span><span class="t" style="-webkit-text-stroke:0.25px;left:1291.71px;top:709.05px;font-size:13.4px;font-weight:400;color:#111;transform:scaleX(0.9877)">1K</span>
<div class="shade"></div>
<div class="vl" style="left:1365px;top:0;height:383px"></div>
<div class="vl" style="left:1366px;top:0;height:383px;background:#fff"></div>
<div class="vl" style="left:1366px;top:383px;height:465px"></div>
</body></html>
